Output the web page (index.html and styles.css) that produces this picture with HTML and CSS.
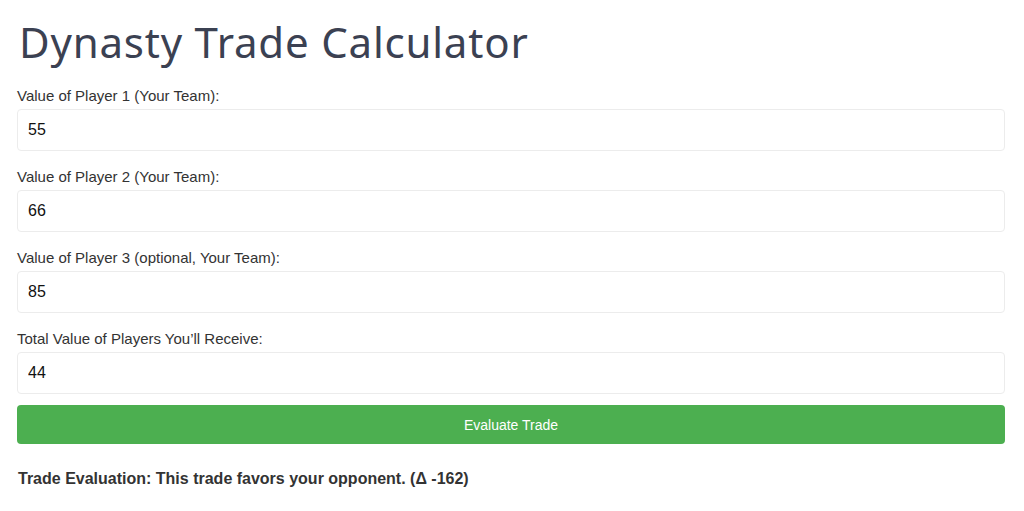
FILE: index.html
```html
<!DOCTYPE html>
<html lang="en">
<head>
    <meta charset="UTF-8">
    <meta name="viewport" content="width=device-width, initial-scale=1.0">
    <link rel="stylesheet" href="styles.css">
    <title>Dynasty Trade Calculator</title>
</head>
<body>

    <div class="page">
        <h1 class="title">Dynasty Trade Calculator</h1>

        <form class="calc-form" onsubmit="return false;">
            <div class="field">
                <label for="p1">Value of Player 1 (Your Team):</label>
                <input type="number" class="input-field" id="p1" value="55">
            </div>
            <div class="field">
                <label for="p2">Value of Player 2 (Your Team):</label>
                <input type="number" class="input-field" id="p2" value="66">
            </div>
            <div class="field">
                <label for="p3">Value of Player 3 (optional, Your Team):</label>
                <input type="number" class="input-field" id="p3" value="85">
            </div>
            <div class="field">
                <label for="recv">Total Value of Players You’ll Receive:</label>
                <input type="number" class="input-field" id="recv" value="44">
            </div>

            <button class="eval-button" type="button">Evaluate Trade</button>
        </form>

        <p class="result">Trade Evaluation: This trade favors your opponent. (Δ -162)</p>
    </div>

</body>
</html>
```

FILE: styles.css
```css
body {
    margin: 0;
    padding: 0;
    background-color: #fff;
    font-family: 'Liberation Sans', Arial, sans-serif;
    color: #333;
}

.page {
    width: 988px;
    padding: 0 0 0 17px;
}

.title {
    font-family: 'Noto Sans', 'Open Sans', sans-serif;
    font-weight: 400;
    font-size: 42px;
    color: #3b4152;
    margin: 0;
    padding: 11px 0 0 2px;
    line-height: 62px;
    letter-spacing: 0.8px;
}

.calc-form {
    display: flex;
    flex-direction: column;
    margin-top: 14px;
}

.field {
    display: flex;
    flex-direction: column;
    margin-bottom: 11px;
}

.field + .field {
    margin-top: 6px;
}

.field label {
    font-size: 15px;
    line-height: 17px;
    margin-bottom: 5px;
    color: #333;
}

.input-field {
    height: 42px;
    box-sizing: border-box;
    border: 1px solid #ececec;
    border-radius: 4px;
    padding: 0 10px;
    font-family: 'Liberation Sans', Arial, sans-serif;
    font-size: 16px;
    color: #111;
    background: #fff;
    outline: none;
    -moz-appearance: textfield;
}

.input-field::-webkit-inner-spin-button,
.input-field::-webkit-outer-spin-button {
    -webkit-appearance: none;
    margin: 0;
}

.eval-button {
    height: 39px;
    background-color: #4caf50;
    border: none;
    border-radius: 4px;
    color: #fff;
    font-family: 'Liberation Sans', Arial, sans-serif;
    font-size: 14px;
    cursor: pointer;
}

.result {
    font-weight: bold;
    font-size: 16px;
    margin: 26px 0 0 1px;
    color: #333;
}
```
